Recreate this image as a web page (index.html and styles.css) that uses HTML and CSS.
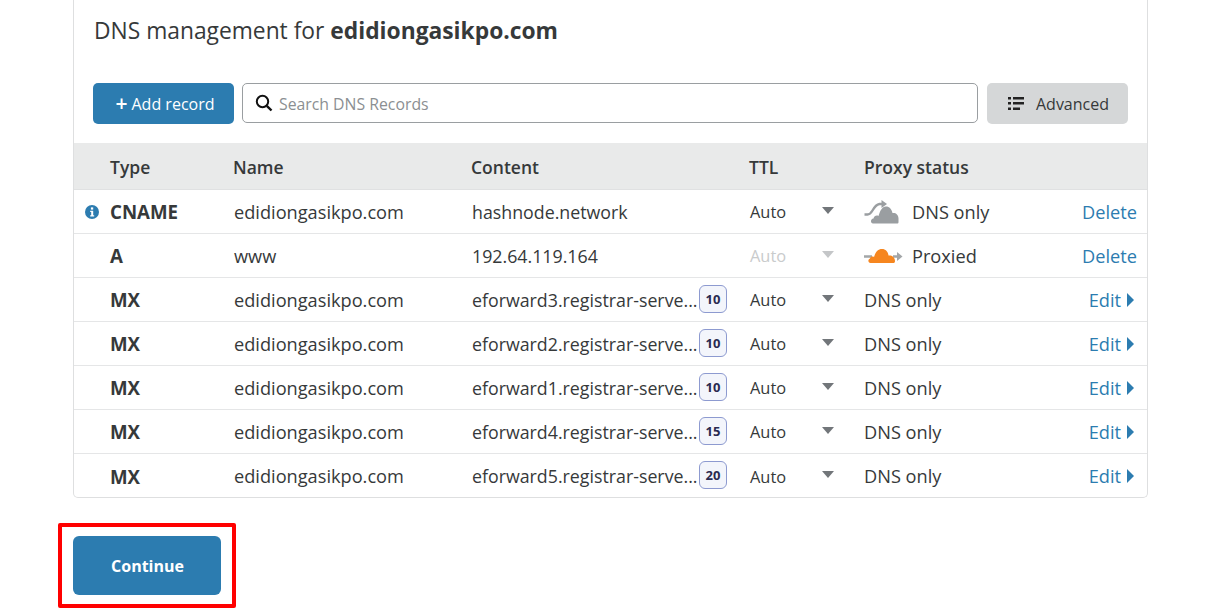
FILE: index.html
```html
<!DOCTYPE html>
<html lang="en">
<head>
  <meta charset="UTF-8">
  <title>DNS management</title>
  <link rel="stylesheet" href="styles.css">
</head>
<body>

  <div class="page">
    <section class="card">
      <h2 class="card-title">DNS management for <b>edidiongasikpo.com</b></h2>

      <!-- Toolbar -->
      <div class="toolbar">
        <button class="btn btn-add"><span class="plus">+</span><span>Add record</span></button>
        <div class="search">
          <svg class="search-icon" width="18" height="18" viewBox="0 0 18 18"><circle cx="7.5" cy="7.5" r="5.7" fill="none" stroke="#111" stroke-width="2"/><path d="M11.8 11.8L16.5 16.5" stroke="#111" stroke-width="2.4"/></svg>
          <span class="placeholder">Search DNS Records</span>
        </div>
        <button class="btn btn-advanced">
          <svg width="16" height="13" viewBox="0 0 16 13"><path d="M0 0h3v2.400H0zM5 0h11v2.400H5zM0 5h3v2.400H0zM5 5h11v2.400H5zM0 10.500h3v2.400H0zM5 10.500h7v2.400H5z" fill="#222"/></svg>
          <span>Advanced</span>
        </button>
      </div>

      <!-- Records -->
      <div class="row row-head">
        <div>Type</div><div class="head-name">Name</div><div class="head-content">Content</div><div class="head-ttl">TTL</div><div></div><div>Proxy status</div><div></div>
      </div>

      <div class="row">
        <div class="type">
          <svg class="info" width="14" height="14" viewBox="0 0 14 14"><circle cx="7" cy="7" r="7" fill="#2c7cb0"/><rect x="5.900" y="2.400" width="2.300" height="2.200" fill="#fff"/><path d="M5.200 5.800h3v4.400h1v1.300H5.200v-1.300h1V7.100h-1z" fill="#fff"/></svg>
          CNAME
        </div>
        <div>edidiongasikpo.com</div>
        <div>hashnode.network</div>
        <div>Auto</div>
        <div class="caret"></div>
        <div class="proxy">
          <svg width="36" height="24" viewBox="0 0 36 24"><path d="M0.500 14.500h3c2.500 0 3.500-1.500 5-4 2-3.500 4-6 7-6.500h3" fill="none" stroke="#9a9ea1" stroke-width="2.400"/><path d="M17.500 0l5.500 4-5.500 4z" fill="#9a9ea1"/><path d="M9 23.500c-2.500 0-3-4.500.500-5 .5-2.500 3-3.500 5-2.500C16 11 18 6.500 22 6.500c3.500 0 5.500 2.500 6.500 6.500 3-.5 6 1.500 6 5.500v3.500c0 1-.5 1.500-1.500 1.500z" fill="#9a9ea1"/></svg>
          <span>DNS only</span>
        </div>
        <div class="action"><a class="link">Delete</a></div>
      </div>

      <div class="row">
        <div class="type">A</div>
        <div>www</div>
        <div>192.64.119.164</div>
        <div class="muted">Auto</div>
        <div class="caret caret-muted"></div>
        <div class="proxy">
          <svg width="39" height="18" viewBox="0 0 39 18"><path d="M0 9.500h8M29 9.500h6" stroke="#a3a6a8" stroke-width="2.600"/><path d="M33 5l5.500 4.500L33 14z" fill="#a3a6a8"/><path d="M6.500 16c-2.500 0-3-3.500-.5-4.500 .5-2 2.500-2.500 4-1.500C11.500 5 14 2 18 2c3.500 0 6 2.500 6.500 6.500 3-.5 6.500 1.500 6.500 5.500 0 1.500-.5 2-2 2z" fill="#f6861f"/></svg>
          <span>Proxied</span>
        </div>
        <div class="action"><a class="link">Delete</a></div>
      </div>

      <div class="row">
        <div class="type">MX</div>
        <div>edidiongasikpo.com</div>
        <div class="content-mx"><span class="short">eforward3.registrar-serve...</span><span class="badge">10</span></div>
        <div>Auto</div>
        <div class="caret"></div>
        <div>DNS only</div>
        <div class="action"><a class="link">Edit</a><span class="arrow"></span></div>
      </div>

      <div class="row">
        <div class="type">MX</div>
        <div>edidiongasikpo.com</div>
        <div class="content-mx"><span class="short">eforward2.registrar-serve...</span><span class="badge">10</span></div>
        <div>Auto</div>
        <div class="caret"></div>
        <div>DNS only</div>
        <div class="action"><a class="link">Edit</a><span class="arrow"></span></div>
      </div>

      <div class="row">
        <div class="type">MX</div>
        <div>edidiongasikpo.com</div>
        <div class="content-mx"><span class="short">eforward1.registrar-serve...</span><span class="badge">10</span></div>
        <div>Auto</div>
        <div class="caret"></div>
        <div>DNS only</div>
        <div class="action"><a class="link">Edit</a><span class="arrow"></span></div>
      </div>

      <div class="row">
        <div class="type">MX</div>
        <div>edidiongasikpo.com</div>
        <div class="content-mx"><span class="short">eforward4.registrar-serve...</span><span class="badge">15</span></div>
        <div>Auto</div>
        <div class="caret"></div>
        <div>DNS only</div>
        <div class="action"><a class="link">Edit</a><span class="arrow"></span></div>
      </div>

      <div class="row">
        <div class="type">MX</div>
        <div>edidiongasikpo.com</div>
        <div class="content-mx"><span class="short">eforward5.registrar-serve...</span><span class="badge">20</span></div>
        <div>Auto</div>
        <div class="caret"></div>
        <div>DNS only</div>
        <div class="action"><a class="link">Edit</a><span class="arrow"></span></div>
      </div>
    </section>

    <div class="continue-wrap">
      <button class="btn-continue">Continue</button>
      <div class="highlight"></div>
    </div>
  </div>

</body>
</html>
```

FILE: styles.css
```css
body {
  margin: 0;
  background: #fff;
  font-family: "Open Sans", "Noto Sans", sans-serif;
  color: #36393a;
}
.page {
  width: 1075px;
  height: 612px;
  margin-left: 73px;
}
.card {
  border: 1px solid #dedfe0;
  border-top: none;
  border-radius: 0 0 5px 5px;
  height: 498px;
  box-sizing: border-box;
  background: #fff;
}
.card-title {
  margin: 0;
  padding: 15px 20px 0;
  font-size: 22.8px;
  font-weight: 400;
  line-height: 32px;
  height: 68px;
  box-sizing: border-box;
}
.card-title b {
  font-weight: 700;
}
.toolbar {
  display: flex;
  gap: 8px;
  padding: 15px 19px 0;
  height: 75px;
  box-sizing: border-box;
}
.btn {
  height: 41px;
  border: none;
  border-radius: 5px;
  font-family: inherit;
  font-size: 16px;
}
.btn-add {
  width: 141px;
  padding: 0 0 0 3px;
  background: #2c7cb0;
  color: #fff;
  display: flex;
  align-items: center;
  justify-content: center;
  gap: 4px;
}
.plus {
  font-size: 21px;
  font-weight: 600;
  line-height: 1;
}
.search {
  flex: 1;
  display: flex;
  align-items: center;
  gap: 6px;
  height: 40px;
  box-sizing: border-box;
  border: 1px solid #9a9ea1;
  border-radius: 5px;
  padding-left: 12px;
}
.placeholder {
  padding-top: 1px;
  font-size: 15.8px;
  color: #8b8f92;
}
.btn-advanced {
  width: 141px;
  margin-left: 1px;
  padding: 0 0 0 2px;
  background: #d5d7d8;
  color: #36393a;
  display: flex;
  align-items: center;
  justify-content: center;
  gap: 12px;
}
.row {
  display: grid;
  grid-template-columns: 124px 238px 278px 72px 42px 1fr 90px;
  align-items: center;
  height: 44px;
  padding: 0 10px 0 36px;
  border-bottom: 1px solid #e5e6e7;
  box-sizing: border-box;
  font-size: 18.2px;
  position: relative;
}
.row:last-child {
  border-bottom: none;
}
.row-head {
  height: 47px;
  padding-top: 2px;
  background: #e9eaea;
  font-size: 17.5px;
  font-weight: 600;
  border-bottom: 1px solid #e0e1e2;
}
.head-name, .head-content, .head-ttl {
  margin-left: -1px;
}
.type {
  font-size: 18.7px;
  font-weight: 700;
}
.info {
  position: absolute;
  left: 11px;
  top: 15px;
}
.row:not(.row-head) > div:nth-child(3) {
  font-size: 17.8px;
}
.content-mx {
  display: flex;
  align-items: center;
  gap: 2px;
  min-width: 0;
}
.short {
  width: 225px;
  flex: none;
  white-space: nowrap;
}
.badge {
  width: 28px;
  height: 28px;
  flex: none;
  box-sizing: border-box;
  border: 1px solid #8d9ad0;
  border-radius: 6px;
  background: #f3f5fb;
  color: #2a2a50;
  font-size: 13px;
  font-weight: 700;
  line-height: 26px;
  text-align: center;
  margin-top: -2px;
}
.row:not(.row-head) > div:nth-child(4) {
  font-size: 16.4px;
}
.muted {
  color: #c9cbcc;
}
.caret {
  width: 0;
  height: 0;
  border-left: 6px solid transparent;
  border-right: 6px solid transparent;
  border-top: 7px solid #72767a;
  margin-top: -3px;
}
.caret-muted {
  border-top-color: #c4c6c8;
}
.proxy {
  display: grid;
  grid-template-columns: 48px auto;
  align-items: center;
}
.action {
  display: flex;
  align-items: center;
  justify-content: flex-end;
  gap: 6px;
}
.link {
  color: #2c7cb0;
}
.arrow {
  width: 0;
  height: 0;
  border-top: 7px solid transparent;
  border-bottom: 7px solid transparent;
  border-left: 7px solid #2c7cb0;
  margin-right: 3px;
}
.continue-wrap {
  position: relative;
  padding-top: 38px;
}
.btn-continue {
  display: block;
  width: 148px;
  height: 59px;
  padding: 1px 0 0 1px;
  border: none;
  border-radius: 6px;
  background: #2c7cb0;
  color: #fff;
  font-family: inherit;
  font-size: 16px;
  font-weight: 700;
}
.highlight {
  position: absolute;
  left: -15px;
  top: 25px;
  width: 178px;
  height: 85px;
  box-sizing: border-box;
  border: 4px solid #ff0000;
  border-radius: 2px;
}
```
